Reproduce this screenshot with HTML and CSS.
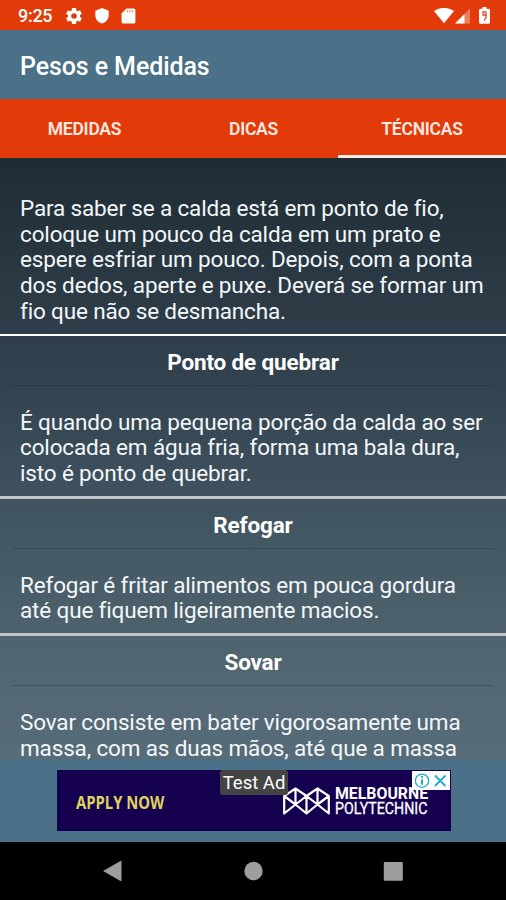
FILE: index.html
```html
<!DOCTYPE html>
<html lang="pt">
<head>
<meta charset="utf-8">
<title>Pesos e Medidas</title>
<link rel="stylesheet" href="styles.css">
</head>
<body>
<div class="screen">
  <div class="status">
    <span class="clock">9:25</span>
    <svg class="gear" width="16" height="16" viewBox="2 2 20 20"><path fill="#fff" d="M19.43 12.98c.04-.32.07-.64.07-.98s-.03-.66-.07-.98l2.11-1.65c.19-.15.24-.42.12-.64l-2-3.46c-.12-.22-.39-.3-.61-.22l-2.49 1c-.52-.4-1.08-.73-1.69-.98l-.38-2.65C14.46 2.18 14.25 2 14 2h-4c-.25 0-.46.18-.49.42l-.38 2.65c-.61.25-1.17.59-1.69.98l-2.49-1c-.23-.09-.49 0-.61.22l-2 3.46c-.13.22-.07.49.12.64l2.11 1.65c-.04.32-.07.65-.07.98s.03.66.07.98l-2.11 1.65c-.19.15-.24.42-.12.64l2 3.46c.12.22.39.3.61.22l2.49-1c.52.4 1.08.73 1.69.98l.38 2.65c.03.24.24.42.49.42h4c.25 0 .46-.18.49-.42l.38-2.65c.61-.25 1.17-.59 1.69-.98l2.49 1c.23.09.49 0 .61-.22l2-3.46c.12-.22.07-.49-.12-.64l-2.11-1.65zM12 15.500a3.500 3.500 0 1 1 0-7 3.500 3.500 0 0 1 0 7z"/></svg>
    <svg class="shield" width="14" height="16" viewBox="0 0 14 16"><path fill="#fff" d="M7 0l6.700 2.700v4.600c0 3.800-2.700 7.200-6.700 8.300C3 14.500.3 11.100.3 7.300V2.700z"/></svg>
    <svg class="card" width="15" height="16" viewBox="0 0 15 16"><path fill="#fff" d="M5.500.5h7.300q1.600 0 1.600 1.600v11.800q0 1.600-1.600 1.600H2.200q-1.600 0-1.600-1.600V5.400z"/><path stroke="#e23a09" stroke-width="1.200" d="M6.500 2v2.500M8.900 2v2.500M11.300 2v2.500" opacity=".5"/></svg>
    <span class="grow"></span>
    <svg width="20" height="16" viewBox="0 0 20 16"><path fill="#fff" d="M0 3.100Q10-3.400 20 3.100L10 15.300z"/></svg>
    <svg class="signal" width="15" height="16" viewBox="0 0 15 16"><path fill="#fff" opacity=".35" d="M0 15.500L15 .5v15z"/><path fill="#fff" d="M0 15.500L9.500 6v9.500z"/></svg>
    <svg class="battery" width="11" height="17" viewBox="0 0 11 17"><path fill="#fff" d="M3.500 0h4v1.800h2q1.500 0 1.500 1.500v12q0 1.500-1.500 1.500h-8Q0 16.800 0 15.300v-12q0-1.500 1.500-1.500h2z"/><path d="M7.300 4.800H4v3.400h3v2.500l-2 2.800M7 4.800v3.400" fill="none" stroke="#e23a09" stroke-width="1.200"/></svg>
  </div>
  <div class="appbar"><span class="apptitle">Pesos e Medidas</span></div>
  <div class="tabs">
    <div class="tab"><span>MEDIDAS</span></div>
    <div class="tab"><span>DICAS</span></div>
    <div class="tab active"><span>TÉCNICAS</span></div>
  </div>
  <div class="content">
    <section class="item first">
      <div class="rule"></div>
      <p>Para saber se a calda está em ponto de fio,<br>coloque um pouco da calda em um prato e<br>espere esfriar um pouco. Depois, com a ponta<br>dos dedos, aperte e puxe. Deverá se formar um<br>fio que não se desmancha.</p>
    </section>
    <section class="item">
      <h2>Ponto de quebrar</h2>
      <div class="rule"></div>
      <p>É quando uma pequena porção da calda ao ser<br>colocada em água fria, forma uma bala dura,<br>isto é ponto de quebrar.</p>
    </section>
    <section class="item">
      <h2>Refogar</h2>
      <div class="rule"></div>
      <p>Refogar é fritar alimentos em pouca gordura<br>até que fiquem ligeiramente macios.</p>
    </section>
    <section class="item">
      <h2>Sovar</h2>
      <div class="rule"></div>
      <p>Sovar consiste em bater vigorosamente uma<br>massa, com as duas mãos, até que a massa</p>
    </section>
  </div>
  <div class="adbar">
    <div class="ad">
      <span class="apply"><span>APPLY NOW</span></span>
      <svg class="logo" width="47" height="28" viewBox="0 0 47 28"><path fill="none" stroke="#fff" stroke-width="2.200" stroke-linejoin="round" d="M1.200 26.500V9L12.500 1.500 23.500 9 34.500 1.500 45.800 9V26.500L34.500 17.500 23.500 26.500 12.500 17.500zM1.200 9L12.500 17.500 23.500 9V26.500M12.500 1.500V17.500M23.500 9L34.500 17.500 45.800 9M34.500 1.500V17.500"/></svg>
      <div class="brand"><b>MELBOURNE</b><span>POLYTECHNIC</span></div>
      <span class="test">Test Ad</span>
      <svg class="choices" width="38" height="19" viewBox="0 0 38 19"><path fill="#fff" d="M0 0h38v19H0z"/><g fill="none" stroke="#20a9d1"><circle cx="10" cy="9.700" r="6.600" stroke-width="1.300"/><path stroke-width="2" d="M10 8.200v5.500M10 5v1.700"/><path stroke-width="1.800" d="M23 4.500l10.500 10.500M33.500 4.500L23 15"/></g></svg>
    </div>
  </div>
  <div class="nav">
    <svg width="20" height="22" viewBox="0 0 20 22"><path fill="#9e9e9e" d="M0 11L17.500 1q1-.5 1 .7v18.600q0 1.200-1 .7z"/></svg>
    <svg width="20" height="20" viewBox="0 0 20 20"><circle cx="10.500" cy="10" r="9.200" fill="#9e9e9e"/></svg>
    <svg width="20" height="20" viewBox="0 0 20 20"><rect x=".8" y=".9" width="19" height="18.800" rx="1" fill="#9e9e9e"/></svg>
  </div>
</div>
</body>
</html>
```
FILE: styles.css
```css
* { box-sizing: border-box; }
body { margin: 0; font-family: Roboto, "Liberation Sans", sans-serif; color: #fff; }
svg { display: block; flex: none; }
.screen { width: 506px; height: 900px; display: flex; flex-direction: column; overflow: hidden; background: #000; }
.status { height: 30px; flex: none; background: #e23a09; display: flex; align-items: center; padding: 1px 16px 0 18px; }
.clock { font-size: 18px; font-weight: 500; width: 48px; line-height: 30px; letter-spacing: -.3px; }
.shield { margin-left: 13px; }
.card { margin-left: 12px; }
.grow { flex: 1; }
.signal { margin-left: 1px; }
.battery { margin-left: 9px; }
.appbar { height: 69px; flex: none; background: #4a7187; display: flex; align-items: center; padding: 3px 20px 0; }
.apptitle { font-size: 25px; font-weight: 500; white-space: nowrap; letter-spacing: -.1px; }
.tabs { height: 59px; flex: none; background: #e23a09; display: grid; grid-template-columns: 169px 169px 168px; }
.tab { display: flex; align-items: center; justify-content: center; padding-top: 1px; font-size: 17.5px; font-weight: 600; letter-spacing: -.25px; color: #ffe9e2; border-bottom: 3px solid transparent; border-top: 3px solid transparent; }
.active { border-bottom-color: #fbeeec; }
.content { height: 602px; flex: none; overflow: hidden; background: linear-gradient(#1f2c34, #334350 38%, #445864 64%, #536772 86%, #566c79); }
.item { border-bottom: 3px solid #c1c4cd; }
.item.first { border-bottom: 2px solid #fff; padding-top: 13px; }
.item.first .rule { opacity: .5; }
h2 { margin: 0; height: 49px; line-height: 52px; font-size: 22.5px; font-weight: 700; letter-spacing: -.15px; text-align: center; }
.rule { height: 1px; margin: 0 12px; background: rgba(20, 35, 45, .28); }
p { margin: 0; padding: 24px 20px 9px; font-size: 22.5px; line-height: 25.7px; letter-spacing: -.15px; white-space: nowrap; color: #f4f7f9; }
.adbar { height: 82px; flex: none; background: #4a7187; padding: 10px 0 0 57px; }
.ad { position: relative; width: 394px; height: 61px; background: #14004f; display: flex; align-items: center; padding-left: 19px; }
.apply { width: 207px; padding-top: 4px; }
.apply span { display: inline-block; font-family: "Open Sans", Roboto, sans-serif; font-size: 17px; font-weight: 700; color: #dfd35f; white-space: nowrap; transform: scaleX(.87); transform-origin: left; }
.logo { margin-top: 1px; }
.brand { margin: 1px 0 0 5px; display: flex; flex-direction: column; align-items: flex-start; white-space: nowrap; }
.brand b, .brand span { font-size: 16.5px; line-height: 15.5px; transform-origin: left; }
.brand b { transform: scaleX(.96); }
.brand span { transform: scaleX(.86); -webkit-text-stroke: .3px #fff; }
.test { position: absolute; left: 163px; top: 0; width: 68px; height: 25px; background: #444; border-radius: 3px; font-size: 18.5px; line-height: 27px; text-align: center; white-space: nowrap; }
.choices { position: absolute; left: 355px; top: 1px; }
.nav { height: 58px; flex: none; display: flex; align-items: center; justify-content: space-between; padding: 0 103px; }
```
